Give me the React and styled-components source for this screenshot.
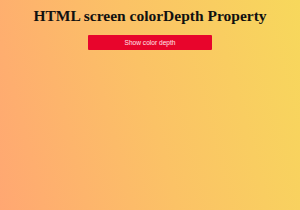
import React from "react";
import styled, { createGlobalStyle } from "styled-components";

const GlobalStyle = createGlobalStyle`
  html, body {
    margin: 0;
    padding: 0;
    height: 100%;
  }
  #root {
    height: 100%;
  }
`;

const Page = styled.div`
  display: flex;
  flex-direction: column;
  align-items: center;
  width: 100%;
  min-height: 210px;
  height: 100%;
  padding-top: 7px;
  box-sizing: border-box;
  background: linear-gradient(75deg, #ffa772 0%, #fbc266 50%, #f7d85c 100%);
`;

const Title = styled.h1`
  margin: 0;
  font-family: "Liberation Serif", "Times New Roman", serif;
  font-weight: bold;
  font-size: 15.5px;
  line-height: 18px;
  color: #111;
  text-align: center;
`;

const DepthButton = styled.button`
  margin-top: 10px;
  width: 124px;
  height: 15px;
  padding: 0;
  border: none;
  border-radius: 1px;
  background: #e8052c;
  color: #ffe6ea;
  font-family: "Liberation Sans", Arial, sans-serif;
  font-size: 6.6px;
  cursor: pointer;
`;

const App = () => {
  return (
    <Page>
      <GlobalStyle />
      <Title>HTML screen colorDepth Property</Title>
      <DepthButton>Show color depth</DepthButton>
    </Page>
  );
};

export default App;
